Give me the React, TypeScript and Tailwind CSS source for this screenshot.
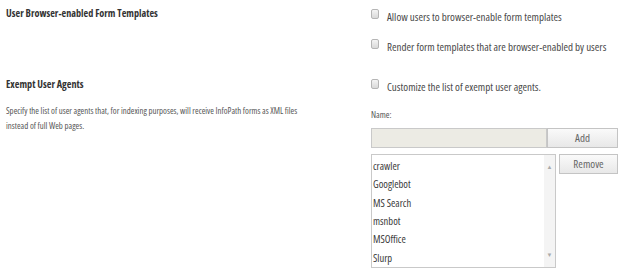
const agents = ['crawler', 'Googlebot', 'MS Search', 'msnbot', 'MSOffice', 'Slurp']

function Checkbox() {
  return (
    <span className="mt-[-6px] h-[10px] w-[8px] shrink-0 rounded-[2px] border border-[#b5b5b5] bg-gradient-to-b from-[#f4f4f4] to-[#d9d9d9]" />
  )
}

function Option({ label }: { label: string }) {
  return (
    <label className="flex items-center gap-[8px]">
      <Checkbox />
      <span className="text-[11px] leading-[14px] text-[#4a4a4a]">{label}</span>
    </label>
  )
}

export default function App() {
  return (
    <div className="flex h-[279px] w-[624px] flex-col bg-white font-['Open_Sans',sans-serif] [font-stretch:condensed]">
      <section className="flex h-[70px]">
        <div className="w-[371px] pl-[6px] pt-[6px]">
          <h2 className="text-[10.2px] font-bold leading-[14px] text-[#333]">User Browser-enabled Form Templates</h2>
        </div>
        <div className="flex flex-col gap-[16px] pt-[10px]">
          <Option label="Allow users to browser-enable form templates" />
          <Option label="Render form templates that are browser-enabled by users" />
        </div>
      </section>

      <section className="flex flex-1">
        <div className="w-[371px] pl-[6px] pt-[7px]">
          <h2 className="text-[10.2px] font-bold leading-[14px] text-[#333]">Exempt User Agents</h2>
          <p className="mt-[13px] w-[328px] text-[8.8px] leading-[15px] text-[#555]">
            Specify the list of user agents that, for indexing purposes, will receive InfoPath forms as XML files
            <br />
            instead of full Web pages.
          </p>
        </div>
        <div className="flex flex-col pt-[10px]">
          <Option label="Customize the list of exempt user agents." />
          <span className="mt-[15px] text-[9px] leading-[12px] text-[#555]">Name:</span>
          <div className="mt-[7px] flex">
            <input className="h-[20px] w-[176px] border border-[#c9c9c9] bg-[#ecebe4] outline-none" />
            <button className="h-[20px] w-[71px] border border-[#c4c4c4] bg-gradient-to-b from-[#fafafa] to-[#e8e8e8] text-[11px] text-[#666]">
              Add
            </button>
          </div>
          <div className="mt-[6px] flex items-start gap-[3px]">
            <div className="flex h-[114px] w-[185px] border border-[#c9c9c9] bg-white">
              <ul className="flex flex-1 flex-col pl-[1px] pt-[2px]">
                {agents.map((a) => (
                  <li key={a} className="h-[18.4px] text-[10.5px] leading-[18px] text-[#3a3a3a]">
                    {a}
                  </li>
                ))}
              </ul>
              <div className="flex w-[11px] flex-col items-center justify-between bg-[#f4f4f4] py-[9px] text-[6px] leading-[6px] text-[#aaa]">
                <span>▲</span>
                <span>▼</span>
              </div>
            </div>
            <button className="h-[20px] w-[59px] border border-[#c4c4c4] bg-gradient-to-b from-[#fafafa] to-[#e8e8e8] text-[11px] text-[#666]">
              Remove
            </button>
          </div>
        </div>
      </section>
    </div>
  )
}
